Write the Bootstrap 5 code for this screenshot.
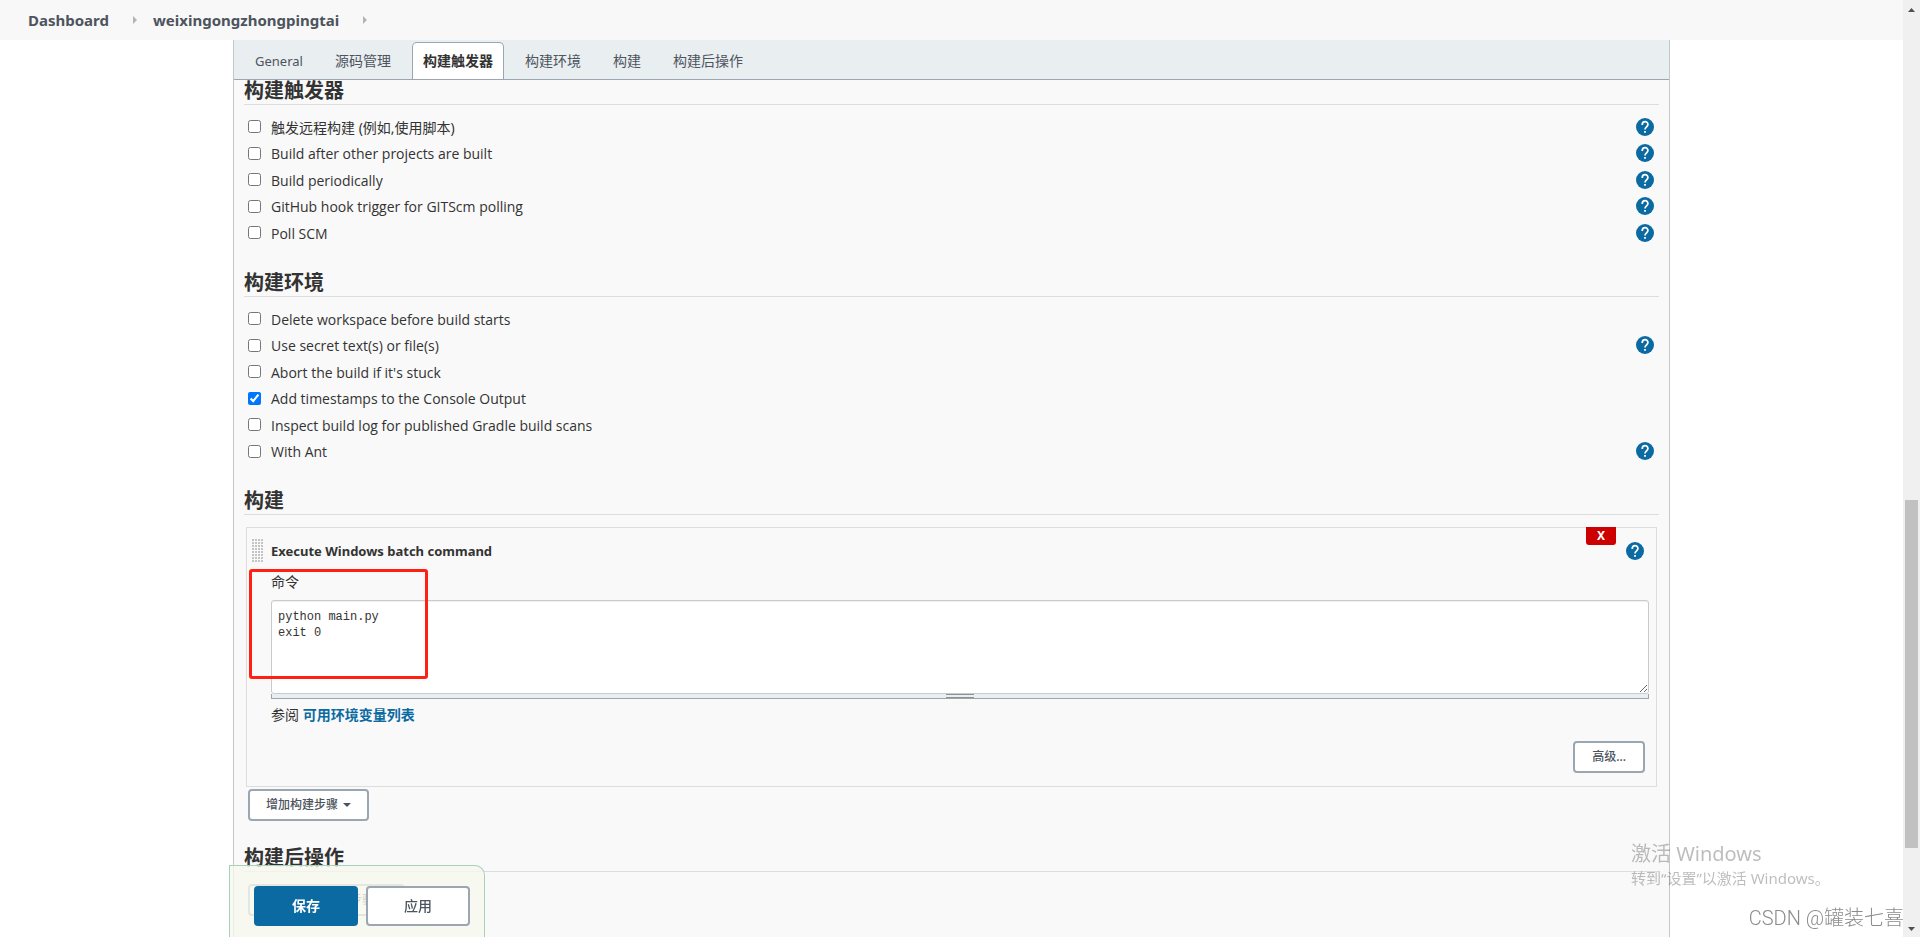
<!DOCTYPE html>
<html lang="zh-CN">
<head>
<meta charset="utf-8">
<meta name="viewport" content="width=device-width, initial-scale=1">
<title>weixingongzhongpingtai Config [Jenkins]</title>
<link rel="stylesheet" href="https://cdn.jsdelivr.net/npm/bootstrap@5.3.0/dist/css/bootstrap.min.css">
<style>
  :root { --ink: #333; --muted-ink: #4d545d; --line: #ddd; --steel: #9aa6b1; --brand: #0b6aa2; }
  body { font-family: "Noto Sans", "Noto Sans CJK SC", sans-serif; font-size: 14px; line-height: 20px; color: var(--ink); background: #fff; }
  .page { height: 100vh; padding-right: 17px; overflow: hidden; }
  .crumbs { height: 40px; padding: 0 28px; background: #f8f8f8; font-size: 15px; font-weight: 700; }
  .crumbs a { color: var(--muted-ink); text-decoration: none; }
  .crumbs svg { width: 4px; height: 8px; fill: #b4b4b4; margin: 0 16px 0 24px; }
  .config { margin: 0 233px; border: solid #c4c7c9; border-width: 0 1px; background: #f9f9f9; }
  .tabs { height: 40px; padding: 2px 10px 0; gap: 10px; background: #e9eef1; border-bottom: 1px solid var(--steel); }
  .tabs .nav-link { padding: 0 10px; line-height: 36px; color: var(--muted-ink); border: 1px solid transparent; border-bottom: 0; border-radius: 5px 5px 0 0; }
  .tabs .nav-link.active { background: #fff; border-color: var(--steel); color: var(--ink); font-weight: 700; }
  .tabs .tab-latin { font-size: 13px; }
  .sections { padding: 0 10px; }
  .sections h2 { margin: 0; height: 25px; font-size: 20px; line-height: 22px; font-weight: 700; border-bottom: 1px solid var(--line); }
  .sections section + section { margin-top: 25px; }
  .sections section + section h2 { height: 26px; line-height: 24px; }
  .options { padding: 8px 5px 0 4px; }
  .option { height: 27px; }
  .option:nth-child(even) { height: 26px; }
  .option label { padding: 2px 0 0 10px; }
  .option input { width: 13px; height: 13px; margin: 0; }
  .latin { font-family: "Open Sans", sans-serif; }
  .help { width: 18px; height: 18px; border: 0; padding: 0; background: none; line-height: 0; }
  .step { margin: 12px 2px 2px; border: 1px solid var(--line); padding: 11px 7px 13px 5px; }
  .step-title { font-size: 13px; font-weight: 700; }
  .step-head { padding-right: 5px; }
  .grip { width: 12px; height: 24px; margin-right: 7px; background: radial-gradient(circle at 1px 1px, #c4c4c4 1px, transparent 1px) 0 0 / 3px 3px; }
  .remove { right: 40px; top: -1px; width: 30px; height: 18px; border: 0; border-radius: 0 0 3px 3px; background: #c00; color: #fff; font-size: 12px; line-height: 18px; font-weight: 700; padding: 0; }
  .step-body { padding: 9px 0 0 19px; }
  .step textarea { height: 94px; padding: 8px 6px; border: 1px solid #c8cccc; border-radius: 3px; box-shadow: inset 0 1px 1px #0001; font: 12px/16px "Liberation Mono", monospace; color: var(--ink); resize: vertical; background: #fff; }
  .sizer { height: 5px; background: #e9eff0; border: solid var(--steel); border-width: 0 1px 1px; }
  .sizer i { width: 28px; height: 4px; border: solid #8c9492; border-width: 1px 0; }
  .env-note { margin: 6px 0 16px; }
  .step a { color: var(--brand); font-weight: 700; text-decoration: none; }
  .btn-line { height: 32px; padding: 0 16px; border: 2px solid var(--steel); border-radius: 4px; background: #fff; color: var(--muted-ink); font-size: 12px; line-height: 28px; font-weight: 500; }
  .advanced { padding: 0 17px; }
  .add-step.dropdown-toggle::after { margin-left: 5px; border-width: 4px 4px 0; vertical-align: 2px; }
  .marker { left: 2px; top: 41px; width: 179px; height: 110px; border: 3px solid #ff1f13; border-radius: 3px; pointer-events: none; }
  .savebar { left: 229px; bottom: 0; height: 72px; padding: 20px 14px 0 24px; gap: 8px; border: 1px solid #aacfbd; border-bottom: 0; border-radius: 0 10px 0 0; background: rgba(246,248,238,.8); }
  .savebar button { width: 104px; height: 40px; font-size: 14px; border-radius: 4px; }
  .save { border: 0; background: var(--brand); color: #fff; font-weight: 700; }
  .savebar .btn-line { font-size: 14px; line-height: 36px; }
  .activate { left: 1631px; bottom: 47px; color: rgba(90,90,90,.4); line-height: 24px; font-size: 15px; pointer-events: none; }
  .activate strong { font-weight: 400; font-size: 20px; }
  .credit { right: 16px; bottom: 5px; color: #8b8b8b; font-family: Roboto, "Noto Sans CJK SC", sans-serif; font-size: 20px; font-weight: 300; line-height: 28px; }
  .rail { right: 0; top: 0; bottom: 0; width: 17px; background: #f0f0f0; padding: 8px 2px 6px; }
  .rail svg { width: 7px; height: 4px; fill: #505050; }
  .thumb { width: 13px; height: 348px; background: #c1c1c1; margin-bottom: 79px; }
</style>
</head>
<body>
<svg class="d-none"><symbol id="help-icon" viewBox="0 0 24 24"><path fill="#0b6aa2" d="M12 0a12 12 0 1 0 0 24 12 12 0 0 0 0-24z"/><path fill="none" stroke="#fff" stroke-width="2.3" d="M8.300 9.200C8.300 3.600 15.900 3.700 15.900 8.700c0 3-3.900 3.100-3.900 6.700"/><path fill="#fff" d="M10.800 17.200h2.400v2.500h-2.400z"/></symbol></svg>
<div class="page">
  <nav class="crumbs d-flex align-items-center" aria-label="breadcrumb">
    <a href="#">Dashboard</a>
    <svg viewBox="0 0 4 8"><path d="M0 0l4 4-4 4z"/></svg>
    <a href="#">weixingongzhongpingtai</a>
    <svg viewBox="0 0 4 8"><path d="M0 0l4 4-4 4z"/></svg>
  </nav>
  <main class="config">
    <nav class="tabs nav flex-nowrap">
      <a class="nav-link tab-latin" href="#">General</a>
      <a class="nav-link" href="#">源码管理</a>
      <a class="nav-link active" href="#triggers">构建触发器</a>
      <a class="nav-link" href="#env">构建环境</a>
      <a class="nav-link" href="#build">构建</a>
      <a class="nav-link" href="#post">构建后操作</a>
    </nav>
    <form class="sections">
      <section id="triggers">
        <h2>构建触发器</h2>
        <div class="options">
          <div class="option d-flex align-items-center"><input type="checkbox" id="t1"><label for="t1">触发远程构建 (例如,使用脚本)</label><button type="button" class="help ms-auto" aria-label="Help"><svg width="18" height="18"><use href="#help-icon"/></svg></button></div>
          <div class="option d-flex align-items-center"><input type="checkbox" id="t2"><label class="latin" for="t2">Build after other projects are built</label><button type="button" class="help ms-auto" aria-label="Help"><svg width="18" height="18"><use href="#help-icon"/></svg></button></div>
          <div class="option d-flex align-items-center"><input type="checkbox" id="t3"><label class="latin" for="t3">Build periodically</label><button type="button" class="help ms-auto" aria-label="Help"><svg width="18" height="18"><use href="#help-icon"/></svg></button></div>
          <div class="option d-flex align-items-center"><input type="checkbox" id="t4"><label class="latin" for="t4">GitHub hook trigger for GITScm polling</label><button type="button" class="help ms-auto" aria-label="Help"><svg width="18" height="18"><use href="#help-icon"/></svg></button></div>
          <div class="option d-flex align-items-center"><input type="checkbox" id="t5"><label class="latin" for="t5">Poll SCM</label><button type="button" class="help ms-auto" aria-label="Help"><svg width="18" height="18"><use href="#help-icon"/></svg></button></div>
        </div>
      </section>
      <section id="env">
        <h2>构建环境</h2>
        <div class="options">
          <div class="option d-flex align-items-center"><input type="checkbox" id="e1"><label class="latin" for="e1">Delete workspace before build starts</label></div>
          <div class="option d-flex align-items-center"><input type="checkbox" id="e2"><label class="latin" for="e2">Use secret text(s) or file(s)</label><button type="button" class="help ms-auto" aria-label="Help"><svg width="18" height="18"><use href="#help-icon"/></svg></button></div>
          <div class="option d-flex align-items-center"><input type="checkbox" id="e3"><label class="latin" for="e3">Abort the build if it's stuck</label></div>
          <div class="option d-flex align-items-center"><input type="checkbox" id="e4" checked><label class="latin" for="e4">Add timestamps to the Console Output</label></div>
          <div class="option d-flex align-items-center"><input type="checkbox" id="e5"><label class="latin" for="e5">Inspect build log for published Gradle build scans</label></div>
          <div class="option d-flex align-items-center"><input type="checkbox" id="e6"><label class="latin" for="e6">With Ant</label><button type="button" class="help ms-auto" aria-label="Help"><svg width="18" height="18"><use href="#help-icon"/></svg></button></div>
        </div>
      </section>
      <section id="build">
        <h2>构建</h2>
        <div class="step position-relative">
          <button type="button" class="remove position-absolute">X</button>
          <div class="step-head d-flex align-items-center">
            <span class="grip"></span><span class="step-title">Execute Windows batch command</span>
            <button type="button" class="help ms-auto" aria-label="Help"><svg width="18" height="18"><use href="#help-icon"/></svg></button>
          </div>
          <div class="step-body">
            <label class="d-block mb-2" for="command">命令</label>
            <textarea id="command" class="d-block w-100" spellcheck="false">python main.py
exit 0</textarea>
            <div class="sizer d-flex justify-content-center"><i></i></div>
            <p class="env-note">参阅 <a href="#">可用环境变量列表</a></p>
            <div class="d-flex justify-content-end me-1"><button type="button" class="btn-line advanced">高级...</button></div>
          </div>
          <div class="marker position-absolute"></div>
        </div>
        <div class="ps-1 d-flex"><button type="button" class="btn-line add-step dropdown-toggle">增加构建步骤</button></div>
      </section>
      <section id="post">
        <h2>构建后操作</h2>
        <div class="ps-1 pt-2 d-flex"><button type="button" class="btn-line add-step dropdown-toggle mt-1">增加构建后操作步骤</button></div>
      </section>
      <div class="py-5"></div>
    </form>
  </main>
</div>
<div class="savebar position-fixed d-flex">
  <button type="button" class="save">保存</button>
  <button type="button" class="btn-line">应用</button>
</div>
<div class="activate position-fixed"><strong class="d-block">激活 Windows</strong><span class="d-block">转到“设置”以激活 Windows。</span></div>
<div class="credit position-fixed">CSDN @罐装七喜</div>
<div class="rail position-fixed d-flex flex-column align-items-center">
  <svg viewBox="0 0 7 4"><path d="M0 4L3.500 0 7 4z"/></svg>
  <div class="thumb mt-auto"></div>
  <svg viewBox="0 0 7 4"><path d="M0 0h7L3.500 4z"/></svg>
</div>
<script src="https://cdn.jsdelivr.net/npm/bootstrap@5.3.0/dist/js/bootstrap.bundle.min.js"></script>
</body>
</html>
